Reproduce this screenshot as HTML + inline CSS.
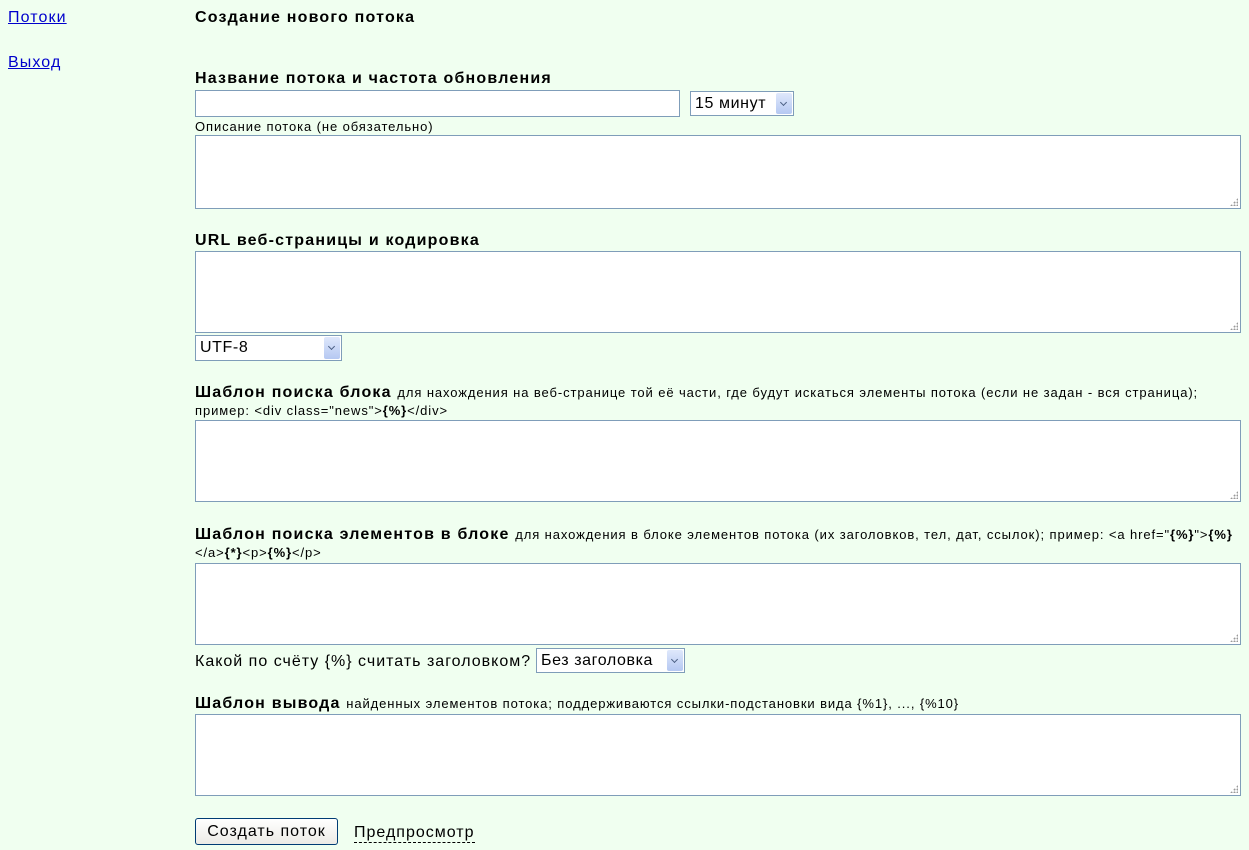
<!DOCTYPE html>
<html><head><meta charset="utf-8"><style>
body{margin:0;background:#f0fff0;font-family:"Liberation Sans",Arial,sans-serif;color:#000;width:1249px;height:850px;overflow:hidden;position:relative;letter-spacing:1px}
.a{position:absolute;white-space:nowrap}
a{color:#0000cc;text-decoration:underline;font-size:16px;letter-spacing:1.1px}
.h{font-size:16px;font-weight:bold;letter-spacing:1.2px}
.s{font-size:13px;font-weight:normal;letter-spacing:0.9px}
.box{position:absolute;background:#fff;border:1px solid #7f9db9;box-sizing:border-box}
.ta:after{content:"";position:absolute;right:2px;bottom:2px;width:8px;height:8px;background:radial-gradient(circle,#999 0.8px,transparent 1.2px) 0 0/3px 3px;clip-path:polygon(100% 0,100% 100%,0 100%)}
.sel{position:absolute;background:#fff;border:1px solid #7f9db9;box-sizing:border-box;font-size:16px;padding:3px 0 0 4px;letter-spacing:0.6px}
.sel i{position:absolute;right:1px;top:1px;bottom:1px;width:16px;background:linear-gradient(#dfe8fb,#b5c8f2);border-radius:2px}
.sel i:after{content:"";position:absolute;left:5px;top:7px;width:4px;height:4px;border-right:1.5px solid #4d6185;border-bottom:1.5px solid #4d6185;transform:rotate(45deg)}
</style></head><body>
<a class="a" style="left:8px;top:9px">Потоки</a>
<a class="a" style="left:8px;top:54px">Выход</a>
<div class="a h" style="left:195px;top:9px">Создание нового потока</div>
<div class="a h" style="left:195px;top:70px">Название потока и частота обновления</div>
<div class="box" style="left:195px;top:90px;width:485px;height:27px"></div>
<div class="sel" style="left:690px;top:91px;width:104px;height:25px">15 минут<i></i></div>
<div class="a s" style="left:195px;top:119px">Описание потока (не обязательно)</div>
<div class="box ta" style="left:195px;top:135px;width:1046px;height:74px"></div>
<div class="a h" style="left:195px;top:232px">URL веб-страницы и кодировка</div>
<div class="box ta" style="left:195px;top:251px;width:1046px;height:82px"></div>
<div class="sel" style="left:195px;top:335px;width:147px;height:26px">UTF-8<i></i></div>
<div class="a h" style="left:195px;top:384px">Шаблон поиска блока <span class="s">для нахождения на веб-странице той её части, где будут искаться элементы потока (если не задан - вся страница);</span></div>
<div class="a s" style="left:195px;top:403px">пример: &lt;div class="news"&gt;<b>{%}</b>&lt;/div&gt;</div>
<div class="box ta" style="left:195px;top:420px;width:1046px;height:82px"></div>
<div class="a h" style="left:195px;top:526px">Шаблон поиска элементов в блоке <span class="s">для нахождения в блоке элементов потока (их заголовков, тел, дат, ссылок); пример: &lt;a href="<b>{%}</b>"&gt;<b>{%}</b></span></div>
<div class="a s" style="left:195px;top:545px">&lt;/a&gt;<b>{*}</b>&lt;p&gt;<b>{%}</b>&lt;/p&gt;</div>
<div class="box ta" style="left:195px;top:563px;width:1046px;height:82px"></div>
<div class="a" style="left:195px;top:653px;font-size:16px">Какой по счёту {%} считать заголовком?</div>
<div class="sel" style="left:536px;top:648px;width:149px;height:25px">Без заголовка<i></i></div>
<div class="a h" style="left:195px;top:695px">Шаблон вывода <span class="s">найденных элементов потока; поддерживаются ссылки-подстановки вида {%1}, ..., {%10}</span></div>
<div class="box ta" style="left:195px;top:714px;width:1046px;height:82px"></div>
<div class="a" style="left:195px;top:818px;width:143px;height:27px;box-sizing:border-box;border:1px solid #003c74;border-radius:3px;background:linear-gradient(#fff,#ecebe6);font-size:16px;text-align:center;line-height:26px">Создать поток</div>
<div class="a" style="left:354px;top:824px;font-size:16px;border-bottom:1px dashed #000;line-height:18px">Предпросмотр</div>
</body></html>
